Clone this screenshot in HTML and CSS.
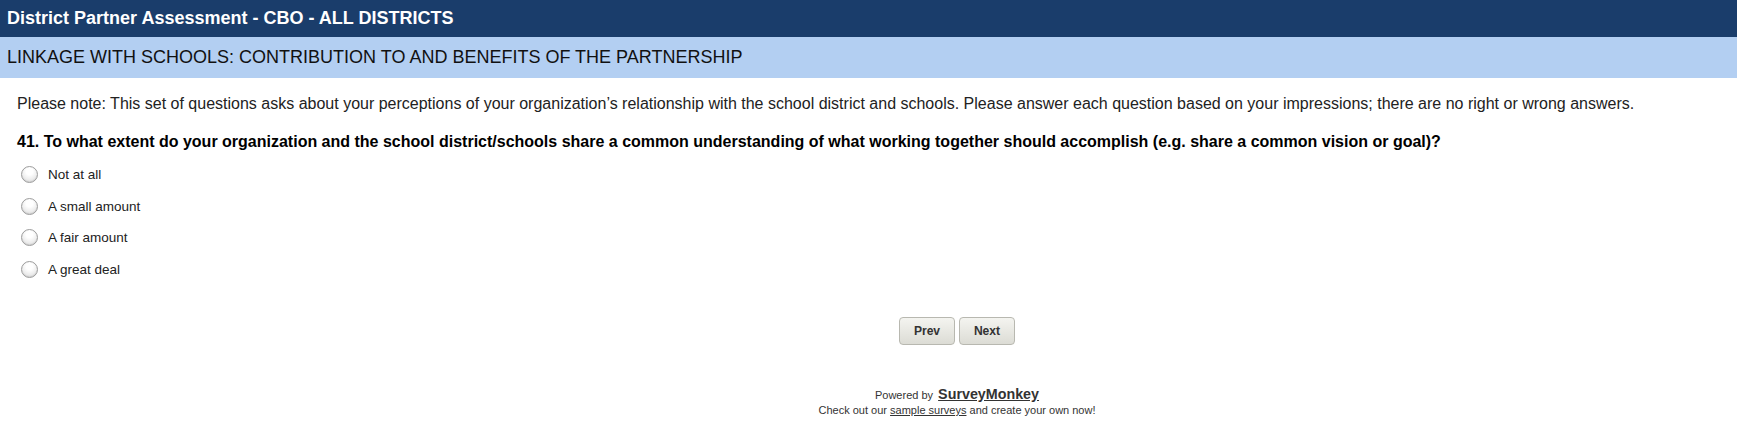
FILE: index.html
```html
<!DOCTYPE html>
<html lang="en">
<head>
    <meta charset="UTF-8">
    <title>District Partner Assessment - CBO - ALL DISTRICTS</title>
    <link rel="stylesheet" href="styles.css">
</head>
<body>
    <div class="survey-title">District Partner Assessment - CBO - ALL DISTRICTS</div>
    <div class="page-title">LINKAGE WITH SCHOOLS: CONTRIBUTION TO AND BENEFITS OF THE PARTNERSHIP</div>

    <div class="content">
        <p class="note">Please note: This set of questions asks about your perceptions of your organization’s relationship with the school district and schools. Please answer each question based on your impressions; there are no right or wrong answers.</p>

        <div class="question">
            <h4>41. To what extent do your organization and the school district/schools share a common understanding of what working together should accomplish (e.g. share a common vision or goal)?</h4>
            <div class="options">
                <label class="option"><span class="radio"></span>Not at all</label>
                <label class="option"><span class="radio"></span>A small amount</label>
                <label class="option"><span class="radio"></span>A fair amount</label>
                <label class="option"><span class="radio"></span>A great deal</label>
            </div>
        </div>
    </div>

    <div class="nav">
        <button class="btn">Prev</button>
        <button class="btn">Next</button>
    </div>

    <div class="footer">
        <div class="powered">Powered by <a href="#">SurveyMonkey</a></div>
        <div class="sample">Check out our <a href="#">sample surveys</a> and create your own now!</div>
    </div>
</body>
</html>
```

FILE: styles.css
```css
body {
    font-family: "Liberation Sans", Arial, sans-serif;
    margin: 0;
    color: #222;
}

.survey-title {
    height: 37px;
    line-height: 37px;
    padding-left: 7px;
    background-color: #1a3d6b;
    color: #fff;
    font-size: 18px;
    font-weight: bold;
}

.page-title {
    height: 41px;
    line-height: 41px;
    padding-left: 7px;
    background-color: #b3cff2;
    color: #111;
    font-size: 18px;
}

.content {
    padding: 17px 17px 0 17px;
}

.note {
    margin: 0;
    font-size: 16px;
    line-height: 18px;
}

.question h4 {
    margin: 20px 0 8px 0;
    font-size: 16px;
    line-height: 18px;
    color: #000;
}

.options {
    display: flex;
    flex-direction: column;
}

.option {
    display: flex;
    align-items: center;
    height: 31.5px;
    font-size: 13.5px;
    color: #222;
}

.radio {
    width: 15px;
    height: 15px;
    margin: 0 10px 0 4px;
    border: 1px solid #9c9c9c;
    border-radius: 50%;
    background: radial-gradient(circle at 50% 30%, #ffffff 25%, #e6e6e6 75%, #d2d2d2 100%);
    box-shadow: inset 0 -1px 1px rgba(0,0,0,0.08);
}

.nav {
    display: flex;
    justify-content: center;
    gap: 4px;
    padding-left: 177px;
    margin-top: 32px;
}

.btn {
    width: 56px;
    height: 28px;
    padding: 0;
    font-family: "Liberation Sans", Arial, sans-serif;
    font-size: 12.1px;
    font-weight: bold;
    color: #333;
    background: linear-gradient(#f4f4f0, #dcdcd5);
    border: 1px solid #b8b8b0;
    border-radius: 4px;
}

.footer {
    padding-left: 177px;
    margin-top: 40px;
    text-align: center;
    color: #333;
}

.powered {
    font-size: 11px;
    line-height: 18px;
}

.powered a {
    font-size: 14.3px;
    font-weight: bold;
    color: #333;
    margin-left: 2px;
}

.sample {
    font-size: 11px;
    line-height: 13px;
}

.sample a {
    color: #333;
}
```
